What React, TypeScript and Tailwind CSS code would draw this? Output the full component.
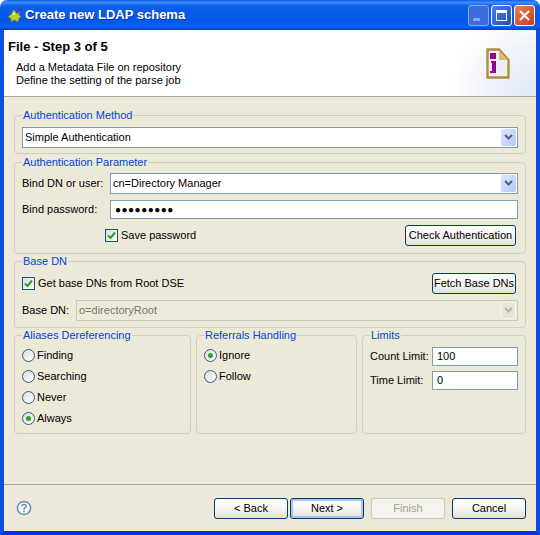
import React from 'react';

const font = { fontFamily: '"Liberation Sans", Arial, sans-serif' };

const Legend: React.FC<{ text: string }> = ({ text }) => (
    <legend className="ml-0 px-[1px] h-[14px] leading-[14px] text-[#0046d5]">{text}</legend>
);

const Button: React.FC<{ label: string; className: string; disabled?: boolean; focused?: boolean }> = ({ label, className, disabled, focused }) => (
    <button
        type="button"
        className={`h-[21px] rounded-[3px] border flex items-center justify-center whitespace-nowrap ${className} ${disabled ? 'border-[#c9c7ba] bg-[#f4f3ee] text-[#a1a192]' : 'border-[#003c74] bg-gradient-to-b from-white via-[#f6f5f0] to-[#e3e0d3] text-black'} ${focused ? 'shadow-[inset_0_0_0_2px_#a9c4f0]' : ''}`}
    >
        {label}
    </button>
);

const Chevron: React.FC<{ color: string }> = ({ color }) => (
    <svg width="9" height="7" viewBox="0 0 9 7">
        <path d="M1 1 L4.5 4.5 L8 1" fill="none" stroke={color} strokeWidth="2" />
    </svg>
);

const Combo: React.FC<{ value: string; className: string; disabled?: boolean }> = ({ value, className, disabled }) => (
    <div className={`h-[21px] border flex items-center justify-between ${className} ${disabled ? 'border-[#c9c7ba] bg-[#ebeadb] text-[#77776c]' : 'border-[#7f9db9] bg-white text-black'}`}>
        <span className="pl-[2px]">{value}</span>
        <span className={`w-[15px] h-[17px] mr-[1px] rounded-[2px] flex items-center justify-center ${disabled ? 'bg-[#e6e5db] border border-[#f5f4ee]' : 'bg-gradient-to-br from-[#dbe5fd] to-[#b6c9f8]'}`}>
            <Chevron color={disabled ? '#b6b6a8' : '#4d6185'} />
        </span>
    </div>
);

const Radio: React.FC<{ label: string; checked?: boolean }> = ({ label, checked }) => (
    <div className="h-[21px] flex items-center gap-[2px]">
        <span className="w-[13px] h-[13px] rounded-full border border-[#2f5a8e] bg-gradient-to-br from-[#dcdcd6] to-white flex items-center justify-center">
            {checked && <span className="w-[5px] h-[5px] rounded-full bg-[#28a428]" />}
        </span>
        <span>{label}</span>
    </div>
);

const Check: React.FC<{ label: string }> = ({ label }) => (
    <div className="flex items-center gap-[3px]">
        <span className="w-[13px] h-[13px] border border-[#1c5180] bg-gradient-to-br from-[#dcdcd6] to-white flex items-center justify-center">
            <svg width="9" height="9" viewBox="0 0 9 9">
                <path d="M1 4.5 L3.5 7 L8 1.5" fill="none" stroke="#21a121" strokeWidth="2" />
            </svg>
        </span>
        <span>{label}</span>
    </div>
);

const TextInput: React.FC<{ value: string; className: string }> = ({ value, className }) => (
    <div className={`border border-[#7f9db9] bg-white flex items-center pl-[4px] ${className}`}>{value}</div>
);

const FileIcon = () => (
    <svg width="24" height="31" viewBox="0 0 24 31">
        <path d="M1.5 1.5 H13 L22.5 12 V29.5 H1.5 Z" fill="#e9eef9" stroke="#b38b3a" strokeWidth="2.4" />
        <path d="M13 2 V12 H22 Z" fill="#dcb877" />
        <rect x="4" y="5" width="6" height="6" fill="#96008f" />
        <path d="M5 13 H10 V25 H4 V23 H6 V15 H5 Z" fill="#96008f" />
    </svg>
);

const TitleIcon = () => (
    <svg width="17" height="17" viewBox="0 0 16 16">
        <path d="M6 3 L9 5 L12 4 L11 7 L13 9 L11 11 L10 14 L7 12 L4 14 L4 11 L1 9 L4 7 Z" fill="#b8d432" stroke="#7d9a1c" strokeWidth="0.6" />
        <path d="M9 6 L14 1" stroke="#5b2fa8" strokeWidth="1.6" />
        <circle cx="6.5" cy="6.5" r="1" fill="#f7f7e0" />
    </svg>
);

const HelpIcon = () => (
    <svg width="16" height="16" viewBox="0 0 16 16">
        <circle cx="8" cy="8" r="6.6" fill="#f3f5fa" stroke="#6d8bb4" strokeWidth="1.5" />
        <path d="M5.8 6.2 C5.8 3.8 10.2 3.8 10.2 6.2 C10.2 7.8 8 7.6 8 9.6" fill="none" stroke="#6d8bb4" strokeWidth="1.5" />
        <rect x="7.2" y="10.6" width="1.6" height="1.6" fill="#6d8bb4" />
    </svg>
);

const App: React.FC = () => {
    return (
        <div className="w-[540px] h-[535px] flex flex-col text-[11px] text-black overflow-hidden bg-white" style={font}>
            <header className="h-[30px] shrink-0 rounded-t-[7px] pl-[7px] pr-[5px] flex items-center bg-[linear-gradient(to_bottom,#0a5ae8_0%,#3d8ff2_8%,#0a5fe8_20%,#0558e6_70%,#0a62ee_88%,#0343c8_100%)]">
                <TitleIcon />
                <span className="ml-[1px] text-[13px] font-bold text-white [text-shadow:1px_1px_#0f3a9e]">Create new LDAP schema</span>
                <div className="ml-auto flex gap-[2px]">
                    <span className="w-[21px] h-[21px] rounded-[3px] border border-[#a9c0f0] bg-[#4a70dc] opacity-80 flex items-end pl-[4px] pb-[4px]">
                        <span className="w-[7px] h-[3px] bg-[#a9bdf0]" />
                    </span>
                    <span className="w-[21px] h-[21px] rounded-[3px] border border-white bg-gradient-to-br from-[#4a7fee] to-[#1f49c8] flex items-center justify-center">
                        <span className="w-[11px] h-[11px] border border-white border-t-[3px]" />
                    </span>
                    <span className="w-[21px] h-[21px] rounded-[3px] border border-white bg-gradient-to-br from-[#e8805c] to-[#c63a14] flex items-center justify-center">
                        <svg width="11" height="11" viewBox="0 0 11 11">
                            <path d="M1 1 L10 10 M10 1 L1 10" stroke="white" strokeWidth="2" />
                        </svg>
                    </span>
                </div>
            </header>

            <div className="flex-1 flex flex-col border-x-[4px] border-b-[4px] border-x-[#0a4fe0] border-b-[#0831d9] min-h-0">
                <section className="h-[66px] shrink-0 bg-[radial-gradient(circle_at_100%_100%,#e2e8f7_0px,#f0f3fb_50px,#ffffff_85px)] flex justify-between border-b border-[#aca899] box-content">
                    <div>
                        <h1 className="mt-[9px] ml-[4px] text-[13px] font-bold leading-[16px]">File - Step 3 of 5</h1>
                        <p className="mt-[6px] ml-[12px] leading-[13px]">Add a Metadata File on repository</p>
                        <p className="ml-[12px] leading-[13px]">Define the setting of the parse job</p>
                    </div>
                    <div className="mt-[18px] mr-[26px]"><FileIcon /></div>
                </section>

                <main className="flex-1 bg-[#ece9d8] pt-[11px] px-[10px] flex flex-col">
                    <fieldset className="h-[46px] border border-[#d0d0bf] rounded-[4px] px-[7px]">
                        <Legend text="Authentication Method" />
                        <Combo value="Simple Authentication" className="mt-[5px]" />
                    </fieldset>

                    <fieldset className="mt-[1px] h-[99px] border border-[#d0d0bf] rounded-[4px] px-[7px]">
                        <Legend text="Authentication Parameter" />
                        <div className="mt-[4px] flex items-center">
                            <span className="w-[88px] shrink-0 whitespace-nowrap">Bind DN or user:</span>
                            <Combo value="cn=Directory Manager" className="flex-1" />
                        </div>
                        <div className="mt-[6px] flex items-center">
                            <span className="w-[88px] shrink-0 whitespace-nowrap">Bind password:</span>
                            <TextInput value="●●●●●●●●●" className="flex-1 h-[19px] pl-[2px] text-[10px] tracking-[0.5px]" />
                        </div>
                        <div className="mt-[6px] ml-[83px] flex items-center justify-between pr-[2px]">
                            <Check label="Save password" />
                            <Button label="Check Authentication" className="w-[111px]" />
                        </div>
                    </fieldset>

                    <fieldset className="h-[74px] border border-[#d0d0bf] rounded-[4px] px-[7px]">
                        <Legend text="Base DN" />
                        <div className="mt-[5px] flex items-center justify-between pr-[2px]">
                            <Check label="Get base DNs from Root DSE" />
                            <Button label="Fetch Base DNs" className="w-[84px]" />
                        </div>
                        <div className="mt-[6px] flex items-center">
                            <span className="w-[54px] shrink-0 whitespace-nowrap">Base DN:</span>
                            <Combo value="o=directoryRoot" className="flex-1" disabled />
                        </div>
                    </fieldset>

                    <div className="flex">
                        <fieldset className="w-[177px] h-[106px] border border-[#d0d0bf] rounded-[4px] px-[7px]">
                            <Legend text="Aliases Dereferencing" />
                            <div className="mt-[3px]">
                                <Radio label="Finding" />
                                <Radio label="Searching" />
                                <Radio label="Never" />
                                <Radio label="Always" checked />
                            </div>
                        </fieldset>
                        <fieldset className="ml-[5px] w-[161px] h-[106px] border border-[#d0d0bf] rounded-[4px] px-[7px]">
                            <Legend text="Referrals Handling" />
                            <div className="mt-[3px]">
                                <Radio label="Ignore" checked />
                                <Radio label="Follow" />
                            </div>
                        </fieldset>
                        <fieldset className="ml-[5px] flex-1 h-[106px] border border-[#d0d0bf] rounded-[4px] px-[7px]">
                            <Legend text="Limits" />
                            <div className="mt-[5px] flex items-center justify-between">
                                <span className="whitespace-nowrap">Count Limit:</span>
                                <TextInput value="100" className="w-[86px] h-[19px]" />
                            </div>
                            <div className="mt-[5px] flex items-center justify-between">
                                <span className="whitespace-nowrap">Time Limit:</span>
                                <TextInput value="0" className="w-[86px] h-[19px]" />
                            </div>
                        </fieldset>
                    </div>
                </main>

                <footer className="h-[47px] shrink-0 bg-[#ece9d8] border-t border-[#aca899] flex items-center pl-[12px] pr-[10px]">
                    <HelpIcon />
                    <div className="ml-auto flex">
                        <Button label="< Back" className="w-[74px]" />
                        <Button label="Next >" className="ml-[2px] w-[74px]" focused />
                        <Button label="Finish" className="ml-[7px] w-[74px]" disabled />
                        <Button label="Cancel" className="ml-[7px] w-[74px]" />
                    </div>
                </footer>
            </div>
        </div>
    );
};

export default App;
